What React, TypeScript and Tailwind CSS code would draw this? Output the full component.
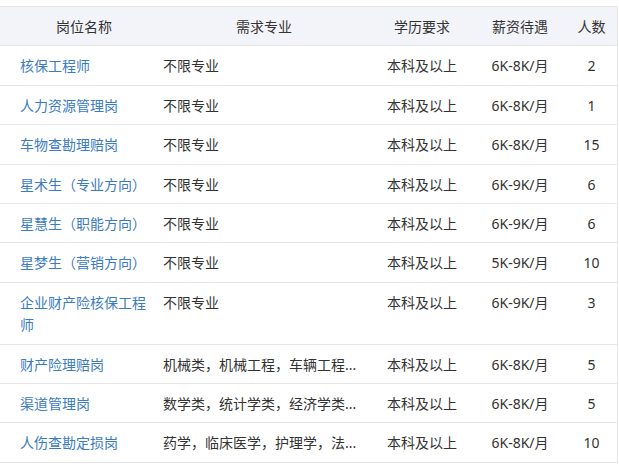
import React from "react";

type Row = { name: string; major: string; edu: string; pay: string; n: string };

const rows: Row[] = [
  { name: "核保工程师", major: "不限专业", edu: "本科及以上", pay: "6K-8K/月", n: "2" },
  { name: "人力资源管理岗", major: "不限专业", edu: "本科及以上", pay: "6K-8K/月", n: "1" },
  { name: "车物查勘理赔岗", major: "不限专业", edu: "本科及以上", pay: "6K-8K/月", n: "15" },
  { name: "星术生（专业方向）", major: "不限专业", edu: "本科及以上", pay: "6K-9K/月", n: "6" },
  { name: "星慧生（职能方向）", major: "不限专业", edu: "本科及以上", pay: "6K-9K/月", n: "6" },
  { name: "星梦生（营销方向）", major: "不限专业", edu: "本科及以上", pay: "5K-9K/月", n: "10" },
  { name: "企业财产险核保工程师", major: "不限专业", edu: "本科及以上", pay: "6K-9K/月", n: "3" },
  { name: "财产险理赔岗", major: "机械类，机械工程，车辆工程...", edu: "本科及以上", pay: "6K-8K/月", n: "5" },
  { name: "渠道管理岗", major: "数学类，统计学类，经济学类...", edu: "本科及以上", pay: "6K-8K/月", n: "5" },
  { name: "人伤查勘定损岗", major: "药学，临床医学，护理学，法...", edu: "本科及以上", pay: "6K-8K/月", n: "10" },
];

const cols = "grid grid-cols-[150px_220px_104px_92px_51px]";

export default function App() {
  return (
    <div
      className="w-[619px] h-[466px] bg-white pt-[6px] text-[14px] leading-[22.4px] text-[#333]"
      style={{ fontFamily: '"Noto Sans", "Noto Sans CJK SC", sans-serif' }}
    >
      <div className="w-[618px] border-r border-[#e6e6ea]">
        <div className={`${cols} bg-[#f3f4f9] border-t border-b border-[#e6e6ea]`}>
          <div className="pl-[20px] pr-[2px] pt-[9px] pb-[7px] text-center">岗位名称</div>
          <div className="pl-[13px] pr-[5px] pt-[9px] pb-[7px] text-center">需求专业</div>
          <div className="pt-[9px] pb-[7px] text-center">学历要求</div>
          <div className="pt-[9px] pb-[7px] text-center">薪资待遇</div>
          <div className="pt-[9px] pb-[7px] text-center">人数</div>
        </div>
        {rows.map((r) => (
          <div key={r.name} className={`${cols} border-b border-[#e6e6ea]`}>
            <div className="pl-[20px] pr-[2px] pt-[9px] pb-[7px] text-[#3a7bc2]">{r.name}</div>
            <div className="pl-[13px] pr-[8px] pt-[9px] pb-[7px] whitespace-nowrap overflow-hidden">{r.major}</div>
            <div className="pt-[9px] pb-[7px] text-center">{r.edu}</div>
            <div className="pt-[9px] pb-[7px] text-center">{r.pay}</div>
            <div className="pt-[9px] pb-[7px] text-center">{r.n}</div>
          </div>
        ))}
      </div>
    </div>
  );
}
